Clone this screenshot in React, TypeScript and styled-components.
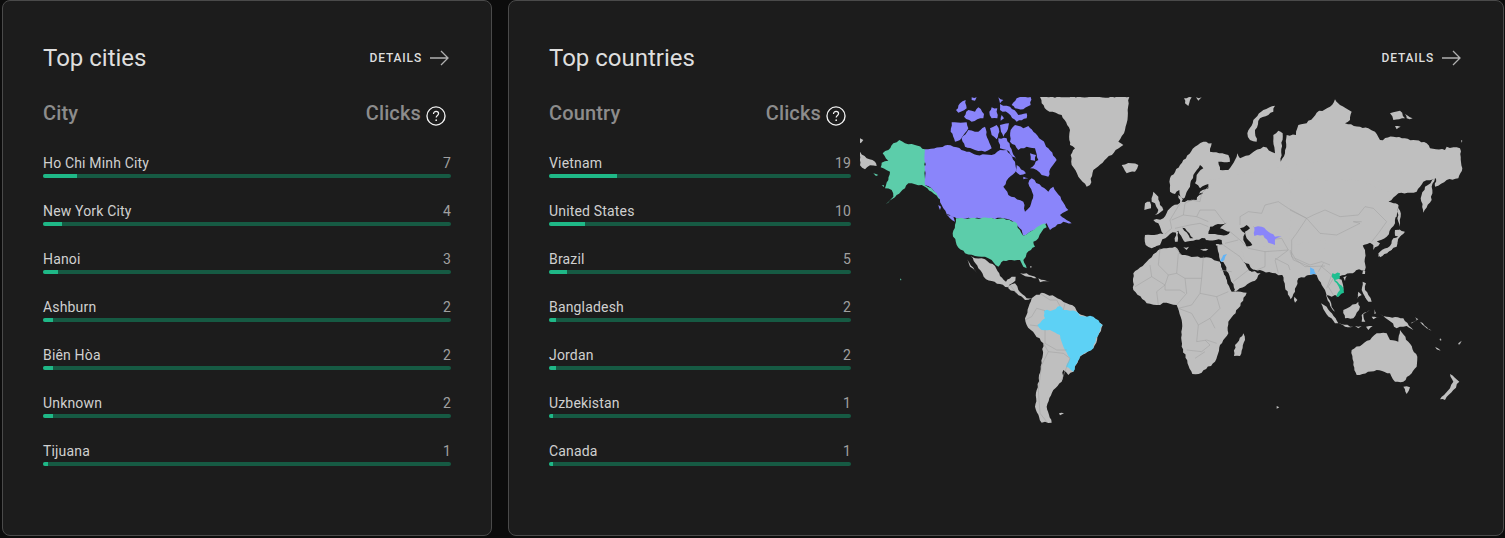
import React from "react";
import styled, { createGlobalStyle } from "styled-components";

const Global = createGlobalStyle`
  html, body { margin: 0; padding: 0; background: #0c0c0c; }
  body { font-family: Roboto, "Liberation Sans", sans-serif; }
`;
const Page = styled.div`
  display: flex;
  gap: 16px;
  padding-left: 2px;
  width: 1505px;
  height: 538px;
  box-sizing: border-box;
  overflow: hidden;
`;
const Card = styled.section<{ $w: number }>`
  width: ${(p) => p.$w}px;
  height: 536px;
  box-sizing: border-box;
  flex: none;
  background: #1c1c1c;
  border: 1px solid #4a4a4a;
  border-radius: 8px;
  padding: 41px 40px 40px;
`;
const Header = styled.header`
  display: flex;
  justify-content: space-between;
  align-items: center;
  height: 32px;
  margin-bottom: 23px;
`;
const Title = styled.h2`
  margin: 0;
  font-size: 24px;
  line-height: 32px;
  font-weight: 400;
  color: #dedede;
`;
const Details = styled.a`
  display: flex;
  align-items: center;
  gap: 8px;
  padding-right: 2px;
  font-size: 12px;
  font-weight: 500;
  letter-spacing: 0.85px;
  color: #dedede;
`;
const Body = styled.div`
  display: flex;
  gap: 9px;
  align-items: flex-start;
`;
const Table = styled.div<{ $w: number }>`
  width: ${(p) => p.$w}px;
  flex: none;
`;
const TableHead = styled.div`
  display: flex;
  justify-content: space-between;
  height: 32px;
  margin-bottom: 24px;
  font-size: 20px;
  line-height: 32px;
  font-weight: 500;
  letter-spacing: 0.15px;
  color: #8c8c8c;
`;
const ClicksCell = styled.span`
  display: flex;
  align-items: center;
  gap: 5px;
  padding-right: 5px;
`;
const Row = styled.div`
  height: 25px;
  margin-bottom: 23px;
`;
const RowText = styled.div`
  display: flex;
  justify-content: space-between;
  height: 21px;
  font-size: 14px;
  line-height: 20px;
  letter-spacing: 0.17px;
  color: #d0d0d0;
`;
const Count = styled.span`
  color: #a0a0a0;
`;
const Track = styled.div`
  height: 4px;
  border-radius: 2px;
  background: #165a43;
  overflow: hidden;
`;
const Fill = styled.div`
  height: 100%;
  background: #1fb887;
`;
const MapSvg = styled.svg`
  display: block;
  flex: none;
  width: 603px;
  height: 327px;
  overflow: hidden;
`;
const Shape = styled.polygon<{ $c?: string }>`
  fill: ${(p) => p.$c ?? "#bfbfbf"};
`;
const Border = styled.polyline`
  fill: none;
  stroke: #a0a0a0;
  stroke-width: 1.6;
`;
const HelpWrap = styled.svg`
  margin-top: 5px;
`;

const ArrowIcon = () => (
  <svg width="19" height="16" viewBox="0 0 19 16" fill="none" stroke="#b0b0b0" strokeWidth="1.3">
    <path d="M0 8H18M11 1L18 8L11 15" />
  </svg>
);
const HelpIcon = () => (
  <HelpWrap width="20" height="20" viewBox="0 0 21 21" fill="none">
    <circle cx="10.5" cy="10.5" r="9.5" stroke="#f2f2f2" strokeWidth="1.4" />
    <path d="M7.9 8.3c0-1.6 1.1-2.6 2.7-2.6 1.5 0 2.6 1 2.6 2.3 0 1.9-2.5 2-2.5 4.2" stroke="#f2f2f2" strokeWidth="1.3" />
    <circle cx="10.7" cy="14.9" r="0.9" fill="#f2f2f2" />
  </HelpWrap>
);

const TOTAL = 84;
const cities: [string, number][] = [
  ["Ho Chi Minh City", 7], ["New York City", 4], ["Hanoi", 3], ["Ashburn", 2], ["Biên Hòa", 2], ["Unknown", 2], ["Tijuana", 1],
];
const countries: [string, number][] = [
  ["Vietnam", 19], ["United States", 10], ["Brazil", 5], ["Bangladesh", 2], ["Jordan", 2], ["Uzbekistan", 1], ["Canada", 1],
];

const PURPLE = "#8a85fa";
const GREEN = "#5ccdaa";
const CYAN = "#5dd1f5";
const BLUE = "#64b4f5";
const TEAL = "#1fbf90";
const WATER = "#1c1c1c";

type P = [string, string?];

// gives long straight edges a coastline's small irregularity
const roughen = (pts: string) => {
  const v = pts.split(" ").map((s) => s.split(",").map(Number));
  const out: string[] = [];
  v.forEach((a, i) => {
    const b = v[(i + 1) % v.length];
    const dx = b[0] - a[0];
    const dy = b[1] - a[1];
    const len = Math.hypot(dx, dy);
    const n = Math.max(1, Math.round(len / 9));
    for (let k = 0; k < n; k++) {
      const t = k / n;
      const h = Math.sin((a[0] + t * dx) * 12.9898 + (a[1] + t * dy) * 78.233) * 43758.5453;
      const r = k === 0 ? 0 : ((h - Math.floor(h)) - 0.5) * 5;
      out.push(`${(a[0] + t * dx - (dy / len) * r).toFixed(1)},${(a[1] + t * dy + (dx / len) * r).toFixed(1)}`);
    }
  });
  return out.join(" ");
};

const americas: P[] = [
  ["0,145 10,150 5,157 0,160"],
  ["0,185 20,205 45,215 50,228 30,226 15,238 0,226"],
  ["40,250 55,255 48,258", GREEN],
  ["118,150 135,160 165,165 195,178 195,285 215,295 235,315 250,338 235,325 215,305 195,290 165,283 145,280 135,295 110,315 78,342 100,320 95,300 75,295 85,270 90,245 62,232 65,218 85,212 68,190 85,180 100,160", GREEN],
  ["65,286 72,286 72,291", GREEN],
  ["195,178 240,172 262,165 290,172 320,185 350,195 395,195 420,180 440,180 465,215 470,240 445,265 430,290 445,315 490,335 495,365 510,350 520,315 505,280 515,265 545,290 565,305 580,290 625,360 600,375 635,400 610,395 570,420 560,400 530,415 490,437 485,420 460,395 430,385 290,385 260,372 245,345 230,310 215,295 195,285", PURPLE],
  ["317,30 320,55 295,68 288,60 300,40", PURPLE],
  ["335,22 350,22 345,32 335,30", PURPLE],
  ["355,52 372,72 370,85 335,95 312,80 325,60 345,65", PURPLE],
  ["395,52 412,55 412,85 395,85 388,65", PURPLE],
  ["415,22 430,30 420,40", PURPLE],
  ["420,42 450,50 475,75 500,70 500,85 470,95 445,70 420,60", PURPLE],
  ["425,75 432,85 422,92", PURPLE],
  ["455,45 470,25 480,21 512,21 512,45 490,58 465,55", PURPLE],
  ["275,97 320,97 325,115 300,150 285,155 272,125", PURPLE],
  ["305,145 325,120 355,125 375,110 385,150 395,175 375,185 345,180 315,170", PURPLE],
  ["390,115 410,105 418,125 410,148 395,135", PURPLE],
  ["420,105 447,100 440,125 430,140 423,125", PURPLE],
  ["452,120 465,105 490,115 505,108 520,125 545,150 565,175 590,210 575,230 565,260 545,255 530,240 510,235 535,210 525,175 500,170 475,180 465,165 450,155", PURPLE],
  ["510,190 528,195 525,212 512,210", PURPLE],
  ["470,225 498,250 480,255 468,245", PURPLE],
  ["415,145 440,145 450,170 465,200 470,210 440,180 420,175", PURPLE],
  ["490,260 505,265 490,268", PURPLE],
  ["235,345 243,350 240,360", PURPLE],
  ["258,372 280,380 285,395 270,385", PURPLE],
  ["540,21 808,21 803,60 800,100 795,120 775,155 790,165 740,205 700,240 690,285 680,290 655,260 635,225 632,195 645,175 630,165 628,150 630,120 605,75 560,60 545,40"],
  ["785,225 815,220 835,225 825,245 800,250"],
  ["288,385 430,385 465,395 490,437 530,412 555,400 560,412 545,425 535,445 520,455 525,470 500,490 490,510 500,535 490,530 480,510 455,510 430,512 415,530 395,510 375,500 345,498 315,490 290,465 278,430 285,405", GREEN],
];

const south: P[] = [
  ["332,18 345,25 375,28 405,48 420,78 438,95 455,80 467,80 466,92 448,104 445,112 420,102 378,88 355,55"],
  ["318,20 328,38 350,68 330,50"],
  ["445,108 465,100 475,120 500,145 515,145 495,150 470,130 445,115"],
  ["480,70 500,70 530,85 505,80"],
  ["535,85 570,93 540,97"],
  ["510,48 516,50 512,54"],
  ["515,145 545,128 585,140 620,160 645,172 655,190 728,225 700,295 660,320 640,365 625,375 610,360 605,395 580,420 560,470 575,518 545,518 525,470 530,420 545,340 550,280 500,225 495,205"],
  ["532,225 555,205 552,182 580,180 600,168 610,180 650,185 660,198 700,200 728,225 708,265 700,295 660,318 640,365 618,350 630,325 615,300 600,255 570,240 545,240", CYAN],
  ["597,490 612,490 600,496"],
  ["120,85 125,90 121,91", GREEN],
];
const southBorders = [
  "555,182 530,175 515,200 495,210",
  "600,168 590,150 570,150 540,130",
  "610,180 615,160",
  "535,228 510,225",
  "555,240 555,280 590,300 620,300",
  "550,280 565,305 545,345 535,420 540,490 560,515",
  "565,305 610,310 630,325 605,390",
  "470,130 450,105",
];

const north: P[] = [
  ["30,305 30,265 60,225 105,170 130,155 155,160 150,185 205,195 210,215 175,215 180,240 205,240 225,210 232,190 240,205 275,190 310,170 345,190 340,135 355,122 368,130 362,215 375,190 380,135 408,135 415,105 440,100 470,68 510,50 525,28 540,45 575,65 570,90 555,100 600,110 625,115 645,125 660,150 700,140 760,150 800,160 810,175 855,180 860,170 900,175 907,235 895,265 860,270 825,290 828,265 790,275 770,305 715,310 685,335 715,345 705,400 680,440 640,460 605,450 615,480 615,540 240,540 145,300 80,330 62,322 58,300 45,312"],
  ["825,265 815,290 815,330 790,368 782,325 795,290"],
  ["345,47 340,65 300,85 285,120 290,155 270,150 262,130 280,90 310,60"],
  ["72,25 95,22 85,48 75,40"],
  ["108,22 125,22 115,32"],
  ["690,70 720,62 735,85 700,90"],
  ["735,72 758,85 740,85"],
  ["705,108 722,110 710,118"],
  ["903,150 907,152 905,158"],
  ["715,345 722,380 718,410 712,385"],
  ["705,420 735,425 718,440 705,437"],
  ["715,440 710,470 675,490 655,500 660,485 690,468 700,445"],
];
const northOver: P[] = [
  ["283,412 305,410 325,425 345,440 365,440 345,448 345,465 325,458 310,435 283,438", PURPLE],
];

const europe: P[] = [
  ["85,180 115,175 135,145 165,128 160,105 175,120 210,115 250,85 250,60 600,0 600,310 550,345 470,345 395,330 355,305 300,300 240,235 80,265 62,255 60,225 115,222 100,190"],
];
const seas: P[] = [
  ["225,15 235,25 215,45 210,70 225,85 250,72 250,85 225,95 215,120 170,125 182,105 195,80 205,45"],
  ["250,222 255,200 270,195 305,188 295,195 285,205 315,215 305,225 270,222"],
  ["345,205 365,195 375,205 360,215 365,235 382,255 365,260 355,240 360,220"],
  ["85,265 105,255 112,238 135,222 160,212 172,235 192,258 200,245 215,262 232,268 235,245 245,240 290,240 295,258 285,300 250,292 210,290 165,280 150,262 100,268"],
  ["172,203 180,205 205,235 195,235"],
];
const med: P[] = [
  ["152,215 160,215 158,245 150,245"],
  ["175,262 192,260 185,270"],
  ["225,268 250,268 235,272"],
  ["272,252 285,252 275,258"],
  ["85,95 100,110 105,135 115,150 90,165 100,150 90,130 80,125"],
  ["60,130 75,125 78,145 58,150"],
];
const gulfs: P[] = [
  ["355,305 372,312 385,330 395,332 380,335 365,320", WATER],
  ["285,305 295,306 330,390 318,390", WATER],
];
const europeBorders = [
  "120,222 140,205 135,180 165,130",
  "140,180 175,165 180,130 200,120 225,125",
  "175,165 215,170 225,150 270,150 300,190",
  "150,205 195,195 225,190 250,200",
  "225,125 230,100 250,80",
  "215,170 250,185",
  "345,170 370,155 410,160 420,135 460,125 490,145 545,175",
  "345,195 345,170",
  "315,215 345,240 370,265 420,275 490,270",
  "385,200 430,240 470,235 490,270",
  "545,175 515,220 500,240 500,290 540,320 600,318",
  "420,275 420,320 395,330",
  "490,270 450,300 460,340",
  "300,250 340,240",
  "295,255 345,290 355,305",
  "170,285 150,262",
];
const europeOver: P[] = [
  ["285,302 295,285 306,282 298,300 290,306", BLUE],
];

const east: P[] = [
  ["0,150 0,240 60,222 80,225 95,255 105,270 115,295 135,335 125,325 108,285 125,290 135,285 145,290 160,270 155,240 140,230 165,225 195,215 220,190 225,165 205,140 240,128 250,135 250,150 270,130 250,110 285,90 300,65 320,50 325,15 295,5 310,-20 200,-60 0,-60"],
  ["325,100 328,88 343,95 330,110 322,125 305,150 270,172 265,160 295,150 315,130"],
  ["222,208 225,222 217,222"],
  ["160,232 170,228 165,243"],
  ["218,245 228,250 225,270 235,285 245,305 235,305 225,290 215,270"],
  ["205,275 215,285 200,298"],
  ["225,290 240,295 232,300"],
  ["205,305 210,320 190,355 165,355 160,330 180,320"],
  ["93,310 110,320 145,370 135,370 105,335"],
  ["145,368 190,380 165,380"],
  ["195,378 215,378 205,385"],
  ["228,380 248,378 235,390"],
  ["215,345 240,330 220,342 226,365 215,365"],
  ["252,328 258,340 253,342"],
  ["270,342 290,350 340,355 370,390 350,378 320,385 295,360"],
  ["245,350 270,352 250,358"],
  ["375,352 385,358 360,372 380,358"],
  ["390,365 425,392 405,380"],
  ["450,415 454,422 449,420"],
  ["435,440 450,450 440,448"],
  ["505,430 510,428 507,436"],
];
const eastBorders = [
  "0,30 50,55 90,100 140,105 210,70 190,65 215,65",
  "50,55 70,45 105,30 150,50 205,45 225,20 250,25 290,65 265,100 245,125",
  "0,150 15,175 60,195 95,185 120,195",
  "85,215 100,190",
  "95,200 125,225 110,265",
  "125,225 155,240",
  "130,235 115,260 130,285",
];

const africa: P[] = [
  ["-80,70 -40,35 -5,0 45,-10 65,15 105,20 155,25 180,35 190,65 215,125 260,128 235,175 205,215 205,250 180,285 165,335 125,368 97,372 65,290 65,210 50,165 20,158 -10,165 -40,160 -80,120"],
  ["172,-15 250,-25 250,30 265,60 302,70 285,92 225,125 205,80 180,30"],
  ["240,-10 340,-10 340,60 275,50 255,30"],
  ["320,-5 500,-30 480,70 450,75 415,85 405,125 392,148 375,110 365,65 340,60"],
  ["250,250 255,270 240,318 222,318 225,285"],
  ["403,140 412,150 405,158"],
  ["350,468 358,472 350,476"],
  ["575,300 630,270 650,250 680,250 690,270 715,275 720,240 745,275 772,320 770,350 730,395 705,395 690,370 650,360 590,375 580,345"],
  ["730,410 750,412 740,432"],
  ["870,372 898,395 880,420 855,450 840,448 870,415 880,395"],
  ["895,280 905,272 900,282"],
  ["828,292 842,303 832,298"],
  ["840,265 845,270 841,271"],
];
const africaBorders = [
  "-30,45 -25,80 -75,110",
  "-25,80 15,105 25,75 -5,45",
  "25,75 50,70 75,85 125,85 130,20",
  "50,70 55,10",
  "75,85 80,130 50,165",
  "15,105 -10,125 -5,165",
  "15,105 15,120 60,120 75,130",
  "125,85 120,130 170,140 205,125",
  "170,140 180,175 150,205 165,235",
  "120,130 95,165 55,175 95,190 115,225 110,275 140,270 170,280",
  "150,205 115,225",
  "80,300 125,305 150,285 135,270",
  "105,325 135,305",
  "215,65 180,60",
  "265,60 220,95",
  "345,25 385,45 390,60",
  "390,5 400,30 450,50",
  "0,-5 -5,45",
];
const asiaOver: P[] = [
  ["450,52 462,58 468,72 450,74", BLUE],
  ["517,70 540,70 540,85 525,90 550,115 552,128 530,142 530,135 540,120 530,100 515,80", TEAL],
];

const draw = (list: P[]) => list.map(([pts, c], i) => <Shape key={i} points={roughen(pts)} $c={c} />);
const lines = (list: string[]) => list.map((pts, i) => <Border key={i} points={pts} />);

const WorldMap = () => (
  <MapSvg viewBox="0 21 1809 981" aria-label="World map">
    <g>{draw(americas)}</g>
    <g transform="translate(0 480)">
      {draw(south)}
      {lines(southBorders)}
    </g>
    <g transform="translate(900 0)">{draw(north)}</g>
    <g transform="translate(795 210)">{draw(europe)}</g>
    <g transform="translate(1290 330)">{draw(east)}</g>
    <g transform="translate(795 210)">
      {draw(seas.map(([p]) => [p, WATER] as P))}
    </g>
    <g transform="translate(900 480)">{draw(africa)}</g>
    <g transform="translate(795 210)">
      {draw(gulfs)}
      {draw(med)}
      {lines(europeBorders)}
      {draw(europeOver)}
    </g>
    <g transform="translate(900 480)">{lines(africaBorders)}</g>
    <g transform="translate(1290 330)">{lines(eastBorders)}</g>
    <g transform="translate(900 480)">{draw(asiaOver)}</g>
    <g transform="translate(900 0)">{draw(northOver)}</g>
  </MapSvg>
);

const Panel = ({ title, label, rows, w, map }: { title: string; label: string; rows: [string, number][]; w: number; map?: boolean }) => (
  <Card $w={map ? 996 : 490}>
    <Header>
      <Title>{title}</Title>
      <Details>
        DETAILS
        <ArrowIcon />
      </Details>
    </Header>
    <Body>
      <Table $w={w}>
        <TableHead>
          <span>{label}</span>
          <ClicksCell>
            Clicks
            <HelpIcon />
          </ClicksCell>
        </TableHead>
        {rows.map(([name, n]) => (
          <Row key={name}>
            <RowText>
              <span>{name}</span>
              <Count>{n}</Count>
            </RowText>
            <Track>
              <Fill style={{ width: `${(n / TOTAL) * 100}%` }} />
            </Track>
          </Row>
        ))}
      </Table>
      {map && <WorldMap />}
    </Body>
  </Card>
);

export default function App() {
  return (
    <Page>
      <Global />
      <Panel title="Top cities" label="City" rows={cities} w={408} />
      <Panel title="Top countries" label="Country" rows={countries} w={302} map />
    </Page>
  );
}
